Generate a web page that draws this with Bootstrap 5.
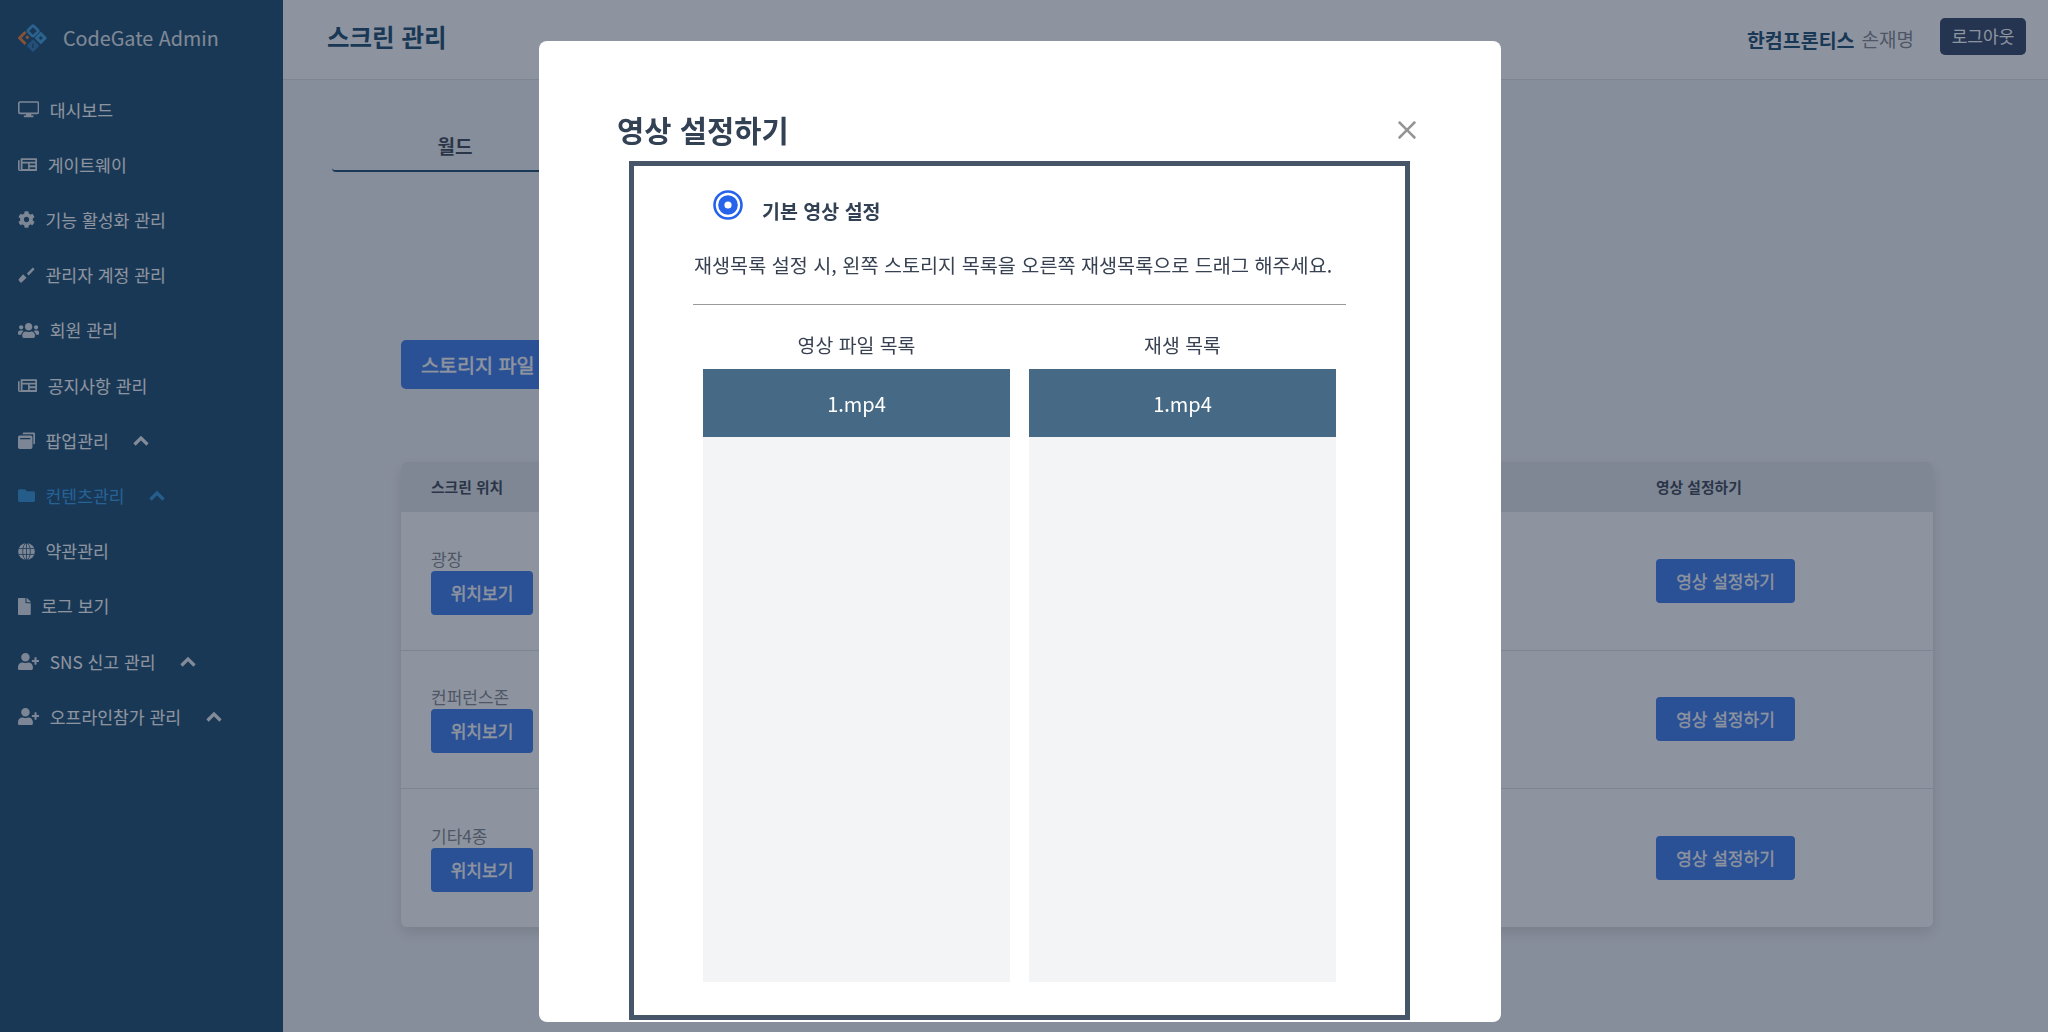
<!DOCTYPE html>
<html lang="ko">
<head>
<meta charset="utf-8">
<title>스크린 관리</title>
<link rel="stylesheet" href="https://cdn.jsdelivr.net/npm/bootstrap@5.3.0/dist/css/bootstrap.min.css">
<style>
html,body{height:100%;overflow:hidden}
body{font-family:"Noto Sans CJK KR","Noto Sans",sans-serif;background:#f1f2f6;color:#374151}
.app-shell{height:1032px}
.side-panel{width:283px;flex:none;background:#14476d;color:#fff}
.brand-row{height:82px;padding-left:18px;gap:15px;font-size:19.75px;line-height:1;color:#e4e8ec}
.brand-logo{width:30px;height:28px;margin-top:-6px}
.brand-text{margin-top:-6px}
.side-link{height:55.2px;padding-left:18px;font-size:17.2px;gap:10.5px;color:#fff;text-decoration:none}
.side-link.is-active{color:#2f9be8}
.side-link:hover{color:#fff}
.ico{height:17px;fill:currentColor;flex:none;opacity:.85}
.chev{width:16px;height:11px;fill:none;stroke:currentColor;stroke-width:3.2;flex:none;margin-left:14px;opacity:.9}
.top-strip{height:80px;background:#fff;border-bottom:1px solid #dde1e6;padding:0 22px 0 44px}
.page-title{font-size:24.5px;font-weight:700;color:#14476d;margin:-6px 0 0}
.user-org{font-size:19.5px;font-weight:700;color:#14476d}
.user-name{font-size:19px;color:#80838c;margin-left:7px}
.logout-btn{width:86px;height:37px;margin-left:26px;margin-top:-7px;background:#2a3f63;color:#fff;font-size:17px;padding:0;border:0;border-radius:5px}
.main-body{padding:40px 115px 0 118px}
.tab-strip{margin-left:-69px;height:52px}
.tab-item{width:246px;height:52px;font-size:19px;font-weight:700;text-align:center;line-height:52px;color:#374151;border-bottom:2px solid #14476d;border-radius:0 0 4px 4px}
.storage-btn{width:220px;height:49px;margin-top:168px;background:#3676ea;color:#fff;font-size:19.6px;font-weight:400;-webkit-text-stroke:.45px #fff;border:0;border-radius:5px;text-align:left;padding:0 20px}
.table-card{margin-top:73px;background:#fff;border-radius:6px;box-shadow:0 6px 14px rgba(0,0,0,.12);overflow:hidden}
.screen-table{table-layout:fixed;--bs-table-bg:transparent}
.screen-table th{height:50px;background:#e2e4e9;font-size:14.8px;font-weight:700;padding:0 30px;vertical-align:middle;border:0;color:#374151}
.screen-table td{padding:34.75px 30px;font-size:17px;line-height:24px;color:#80838c;vertical-align:middle;border-color:#dde1e6}
.screen-table tr:last-child td{border-bottom:0}
.col-first{width:400px}
.col-last{width:307px}
.row-btn{display:block;height:44px;padding:0;background:#3676ea;color:#fff;font-size:17px;font-weight:400;border:0;border-radius:4px}
.pos-btn{width:102px;-webkit-text-stroke:.45px #fff}
.set-btn{width:139px;-webkit-text-stroke:.3px #fff}
.modal.pad-fix{padding-right:8px}
.modal-backdrop{--bs-backdrop-bg:#1e293f;--bs-backdrop-opacity:.5}
.set-dialog{max-width:none;width:962px;margin:41px auto 0}
.set-content{height:981px;border:0;border-radius:8px;padding:69px 0 1px;display:flex;flex-direction:column;align-items:center}
.set-head{width:806px;padding:0 6px 0 0}
.set-title{font-size:29.6px;font-weight:700;line-height:40px;color:#334155;margin:0}
.set-close{width:20px;height:20px;padding:0;background-size:20px;opacity:.42;margin:-1px 0 0}
.set-box{width:781px;height:859px;margin:11px 0 0 -1px;border:5px solid #475569;padding:24px 59px 0;background:#fff}
.radio-row{padding-left:20px;gap:19px}
.radio-mark{width:30px;height:30px;flex:none}
.radio-label{font-size:19.5px;font-weight:700;line-height:30px;padding-top:6px;color:#334155}
.set-desc{font-size:19.64px;line-height:30px;margin:24px 0 0 1px;color:#374151;white-space:nowrap}
.set-rule{margin:24px 0 25px;border:0;border-top:1px solid #999;opacity:1}
.list-pair{padding:0 10px;gap:19px}
.list-col{width:307px}
.list-head{font-size:19.4px;line-height:30px;text-align:center;margin-bottom:9px;color:#374151}
.list-well{height:613px;background:#f3f4f6}
.list-entry{height:68px;background:#466a85;color:#fff;font-size:20px;line-height:70px;text-align:center}
</style>
</head>
<body>
<div class="app-shell d-flex">
  <aside class="side-panel">
    <div class="brand-row d-flex align-items-center">
      <svg class="brand-logo" viewBox="0 0 30 28"><g transform="rotate(45 15 14)"><rect x="6" y="5" width="8" height="8" rx="1" fill="none" stroke="#3a9bdc" stroke-width="2.6"/><rect x="16" y="4" width="9" height="9" rx="1" fill="#3a9bdc"/><rect x="16" y="15" width="9" height="9" rx="1" fill="#2a74b0"/><path d="M5.5 15v8.500H14" fill="none" stroke="#ea7a2e" stroke-width="3"/><rect x="9" y="16" width="3" height="3" fill="#ea7a2e"/><rect x="19" y="7" width="3" height="3" fill="#14476d"/><path d="M19 18l3 3" stroke="#14476d" stroke-width="1.400"/></g></svg>
      <span class="brand-text">CodeGate Admin</span>
    </div>
    <nav class="d-flex flex-column">
      <a class="side-link d-flex align-items-center" href="#"><svg class="ico" viewBox="0 0 640 512"><rect x="24" y="28" width="592" height="344" rx="36" fill="none" stroke="currentColor" stroke-width="48"/><path d="M240 372h160v68h64v48H176v-48h64z"/></svg><span>대시보드</span></a>
      <a class="side-link d-flex align-items-center" href="#"><svg class="ico" viewBox="0 0 576 512"><path fill-rule="evenodd" d="M96 64h456a24 24 0 0 1 24 24v336a24 24 0 0 1-24 24H48a48 48 0 0 1-48-48V128h48v272a16 16 0 0 0 32 0V80a16 16 0 0 1 16-16z M136 120v56h384v-56z M136 224v168h168V224z M352 224v56h168v-56z M352 336v56h168v-56z"/></svg><span>게이트웨이</span></a>
      <a class="side-link d-flex align-items-center" href="#"><svg class="ico" viewBox="0 0 512 512"><path d="M487.4 315.7l-42.6-24.6c4.3-23.2 4.3-47 0-70.2l42.6-24.6c4.9-2.8 7.1-8.6 5.500-14-11.1-35.6-30-67.8-54.700-94.600-3.800-4.100-10-5.100-14.800-2.300L380.800 110c-17.900-15.400-38.500-27.300-60.800-35.100V25.800c0-5.600-3.900-10.500-9.400-11.700-36.700-8.200-74.300-7.800-109.200 0-5.500 1.200-9.400 6.100-9.400 11.700V75c-22.200 7.900-42.800 19.800-60.800 35.100L88.700 85.500c-4.900-2.800-11-1.900-14.800 2.300-24.700 26.700-43.600 58.900-54.700 94.600-1.700 5.400.6 11.200 5.500 14L67.300 221c-4.300 23.200-4.300 47 0 70.200l-42.600 24.600c-4.900 2.800-7.100 8.600-5.500 14 11.100 35.600 30 67.800 54.700 94.600 3.800 4.100 10 5.100 14.800 2.300l42.600-24.600c17.900 15.400 38.500 27.300 60.800 35.100v49.200c0 5.600 3.900 10.500 9.400 11.700 36.700 8.200 74.300 7.800 109.200 0 5.500-1.200 9.400-6.100 9.400-11.700v-49.200c22.200-7.900 42.800-19.800 60.800-35.100l42.600 24.600c4.900 2.800 11 1.900 14.800-2.300 24.700-26.700 43.600-58.900 54.700-94.600 1.500-5.500-.7-11.300-5.600-14.100zM256 336c-44.100 0-80-35.900-80-80s35.900-80 80-80 80 35.900 80 80-35.900 80-80 80z"/></svg><span>기능 활성화 관리</span></a>
      <a class="side-link d-flex align-items-center" href="#"><svg class="ico" viewBox="0 0 20 20"><path d="M1 14l5-5.500 4 4-5.500 5.500a1.500 1.500 0 0 1-2 0L1 16a1.500 1.500 0 0 1 0-2z"/><path d="M10.500 7.500L17.500.5 19.500 2.500l-7 7.500z"/></svg><span>관리자 계정 관리</span></a>
      <a class="side-link d-flex align-items-center" href="#"><svg class="ico" viewBox="0 0 640 512"><path d="M96 224c35.300 0 64-28.700 64-64s-28.700-64-64-64-64 28.700-64 64 28.700 64 64 64zm448 0c35.300 0 64-28.700 64-64s-28.700-64-64-64-64 28.700-64 64 28.700 64 64 64zm32 32h-64c-17.600 0-33.500 7.100-45.100 18.600 40.300 22.100 68.900 62 75.100 109.400h66c17.700 0 32-14.300 32-32v-32c0-35.300-28.700-64-64-64zm-256 0c61.900 0 112-50.100 112-112S381.900 32 320 32 208 82.100 208 144s50.100 112 112 112zm76.800 32h-8.300c-20.800 10-43.900 16-68.500 16s-47.600-6-68.500-16h-8.300C179.600 288 128 339.600 128 403.200V432c0 26.500 21.500 48 48 48h288c26.500 0 48-21.500 48-48v-28.800c0-63.600-51.600-115.200-115.200-115.200zm-223.700-13.400C161.500 263.100 145.600 256 128 256H64c-35.300 0-64 28.700-64 64v32c0 17.700 14.300 32 32 32h65.900c6.300-47.400 34.900-87.300 75.200-109.400z"/></svg><span>회원 관리</span></a>
      <a class="side-link d-flex align-items-center" href="#"><svg class="ico" viewBox="0 0 576 512"><path fill-rule="evenodd" d="M96 64h456a24 24 0 0 1 24 24v336a24 24 0 0 1-24 24H48a48 48 0 0 1-48-48V128h48v272a16 16 0 0 0 32 0V80a16 16 0 0 1 16-16z M136 120v56h384v-56z M136 224v168h168V224z M352 224v56h168v-56z M352 336v56h168v-56z"/></svg><span>공지사항 관리</span></a>
      <a class="side-link d-flex align-items-center" href="#"><svg class="ico" viewBox="0 0 20 20"><path d="M7 .5h11.500A1.500 1.500 0 0 1 20 2v11a1.500 1.500 0 0 1-1.500 1.500H18V2.500H5.500V2A1.500 1.500 0 0 1 7 .5z"/><path fill-rule="evenodd" d="M2 4h13a2 2 0 0 1 2 2v12a2 2 0 0 1-2 2H2a2 2 0 0 1-2-2V6a2 2 0 0 1 2-2z M2.500 7v1.500h12V7z"/></svg><span>팝업관리</span><svg class="chev" viewBox="0 0 16 11"><path d="M1.500 9.500L8 3l6.500 6.500"/></svg></a>
      <a class="side-link is-active d-flex align-items-center" href="#"><svg class="ico" viewBox="0 0 512 512"><path d="M464 128H272l-64-64H48C21.490 64 0 85.490 0 112v288c0 26.510 21.490 48 48 48h416c26.510 0 48-21.490 48-48V176c0-26.510-21.490-48-48-48z"/></svg><span>컨텐츠관리</span><svg class="chev" viewBox="0 0 16 11"><path d="M1.500 9.500L8 3l6.500 6.500"/></svg></a>
      <a class="side-link d-flex align-items-center" href="#"><svg class="ico" viewBox="0 0 20 20"><circle cx="10" cy="10" r="9.800"/><g fill="none" stroke="#14476d" stroke-width=".9"><ellipse cx="10" cy="10" rx="4.500" ry="9.800"/><path d="M10 .2v19.600M.8 6.500h18.400M.8 13.500h18.400"/></g></svg><span>약관관리</span></a>
      <a class="side-link d-flex align-items-center" href="#"><svg class="ico" viewBox="0 0 384 512"><path d="M224 136V0H24C10.700 0 0 10.700 0 24v464c0 13.300 10.700 24 24 24h336c13.300 0 24-10.700 24-24V160H248c-13.200 0-24-10.800-24-24zm160-14.100v6.100H256V0h6.100c6.400 0 12.500 2.500 17 7l97.900 98c4.500 4.500 7 10.600 7 16.900z"/></svg><span>로그 보기</span></a>
      <a class="side-link d-flex align-items-center" href="#"><svg class="ico" viewBox="0 0 640 512"><path d="M624 208h-64v-64c0-8.800-7.200-16-16-16h-32c-8.800 0-16 7.200-16 16v64h-64c-8.800 0-16 7.200-16 16v32c0 8.800 7.200 16 16 16h64v64c0 8.800 7.200 16 16 16h32c8.800 0 16-7.200 16-16v-64h64c8.800 0 16-7.200 16-16v-32c0-8.800-7.200-16-16-16zm-400 48c70.700 0 128-57.300 128-128S294.700 0 224 0 96 57.300 96 128s57.300 128 128 128zm89.600 32h-16.700c-22.200 10.200-46.900 16-72.900 16s-50.600-5.800-72.900-16h-16.700C60.200 288 0 348.200 0 422.400V464c0 26.500 21.500 48 48 48h352c26.500 0 48-21.500 48-48v-41.600c0-74.200-60.200-134.400-134.400-134.400z"/></svg><span>SNS 신고 관리</span><svg class="chev" viewBox="0 0 16 11"><path d="M1.500 9.500L8 3l6.500 6.500"/></svg></a>
      <a class="side-link d-flex align-items-center" href="#"><svg class="ico" viewBox="0 0 640 512"><path d="M624 208h-64v-64c0-8.800-7.200-16-16-16h-32c-8.800 0-16 7.200-16 16v64h-64c-8.800 0-16 7.200-16 16v32c0 8.800 7.200 16 16 16h64v64c0 8.800 7.200 16 16 16h32c8.800 0 16-7.200 16-16v-64h64c8.800 0 16-7.200 16-16v-32c0-8.800-7.200-16-16-16zm-400 48c70.700 0 128-57.300 128-128S294.700 0 224 0 96 57.300 96 128s57.300 128 128 128zm89.600 32h-16.700c-22.200 10.200-46.900 16-72.900 16s-50.600-5.800-72.900-16h-16.700C60.200 288 0 348.200 0 422.400V464c0 26.500 21.500 48 48 48h352c26.500 0 48-21.500 48-48v-41.600c0-74.200-60.200-134.400-134.400-134.400z"/></svg><span>오프라인참가 관리</span><svg class="chev" viewBox="0 0 16 11"><path d="M1.500 9.500L8 3l6.500 6.500"/></svg></a>
    </nav>
  </aside>
  <div class="flex-grow-1">
    <header class="top-strip d-flex align-items-center justify-content-between">
      <h1 class="page-title">스크린 관리</h1>
      <div class="d-flex align-items-center">
        <span class="user-org">한컴프론티스</span><span class="user-name">손재명</span>
        <button class="logout-btn" type="button">로그아웃</button>
      </div>
    </header>
    <main class="main-body">
      <div class="tab-strip d-flex"><div class="tab-item">월드</div><div class="tab-item"></div></div>
      <button class="storage-btn d-block" type="button">스토리지 파일</button>
      <div class="table-card">
        <table class="table screen-table mb-0">
          <colgroup><col class="col-first"><col><col class="col-last"></colgroup>
          <thead><tr><th>스크린 위치</th><th></th><th>영상 설정하기</th></tr></thead>
          <tbody>
            <tr><td>광장<button class="row-btn pos-btn" type="button">위치보기</button></td><td></td><td><button class="row-btn set-btn" type="button">영상 설정하기</button></td></tr>
            <tr><td>컨퍼런스존<button class="row-btn pos-btn" type="button">위치보기</button></td><td></td><td><button class="row-btn set-btn" type="button">영상 설정하기</button></td></tr>
            <tr><td>기타4종<button class="row-btn pos-btn" type="button">위치보기</button></td><td></td><td><button class="row-btn set-btn" type="button">영상 설정하기</button></td></tr>
          </tbody>
        </table>
      </div>
    </main>
  </div>
</div>
<div class="modal-backdrop show"></div>
<div class="modal pad-fix d-block" tabindex="-1">
  <div class="modal-dialog set-dialog">
    <div class="modal-content set-content">
      <div class="set-head d-flex justify-content-between align-items-center">
        <h2 class="set-title">영상 설정하기</h2>
        <button class="btn-close set-close" type="button" aria-label="Close"></button>
      </div>
      <div class="set-box">
        <div class="radio-row d-flex align-items-start">
          <svg class="radio-mark" viewBox="0 0 30 30"><circle cx="15" cy="15" r="13.500" fill="#fff" stroke="#2563eb" stroke-width="2.600"/><circle cx="15" cy="15" r="9.800" fill="#2563eb"/><circle cx="15" cy="15" r="3.600" fill="#fff"/></svg>
          <span class="radio-label">기본 영상 설정</span>
        </div>
        <p class="set-desc">재생목록 설정 시, 왼쪽 스토리지 목록을 오른쪽 재생목록으로 드래그 해주세요.</p>
        <hr class="set-rule">
        <div class="list-pair d-flex">
          <div class="list-col">
            <div class="list-head">영상 파일 목록</div>
            <div class="list-well"><div class="list-entry">1.mp4</div></div>
          </div>
          <div class="list-col">
            <div class="list-head">재생 목록</div>
            <div class="list-well"><div class="list-entry">1.mp4</div></div>
          </div>
        </div>
      </div>
    </div>
  </div>
</div>
<script src="https://cdn.jsdelivr.net/npm/bootstrap@5.3.0/dist/js/bootstrap.bundle.min.js"></script>
</body>
</html>
